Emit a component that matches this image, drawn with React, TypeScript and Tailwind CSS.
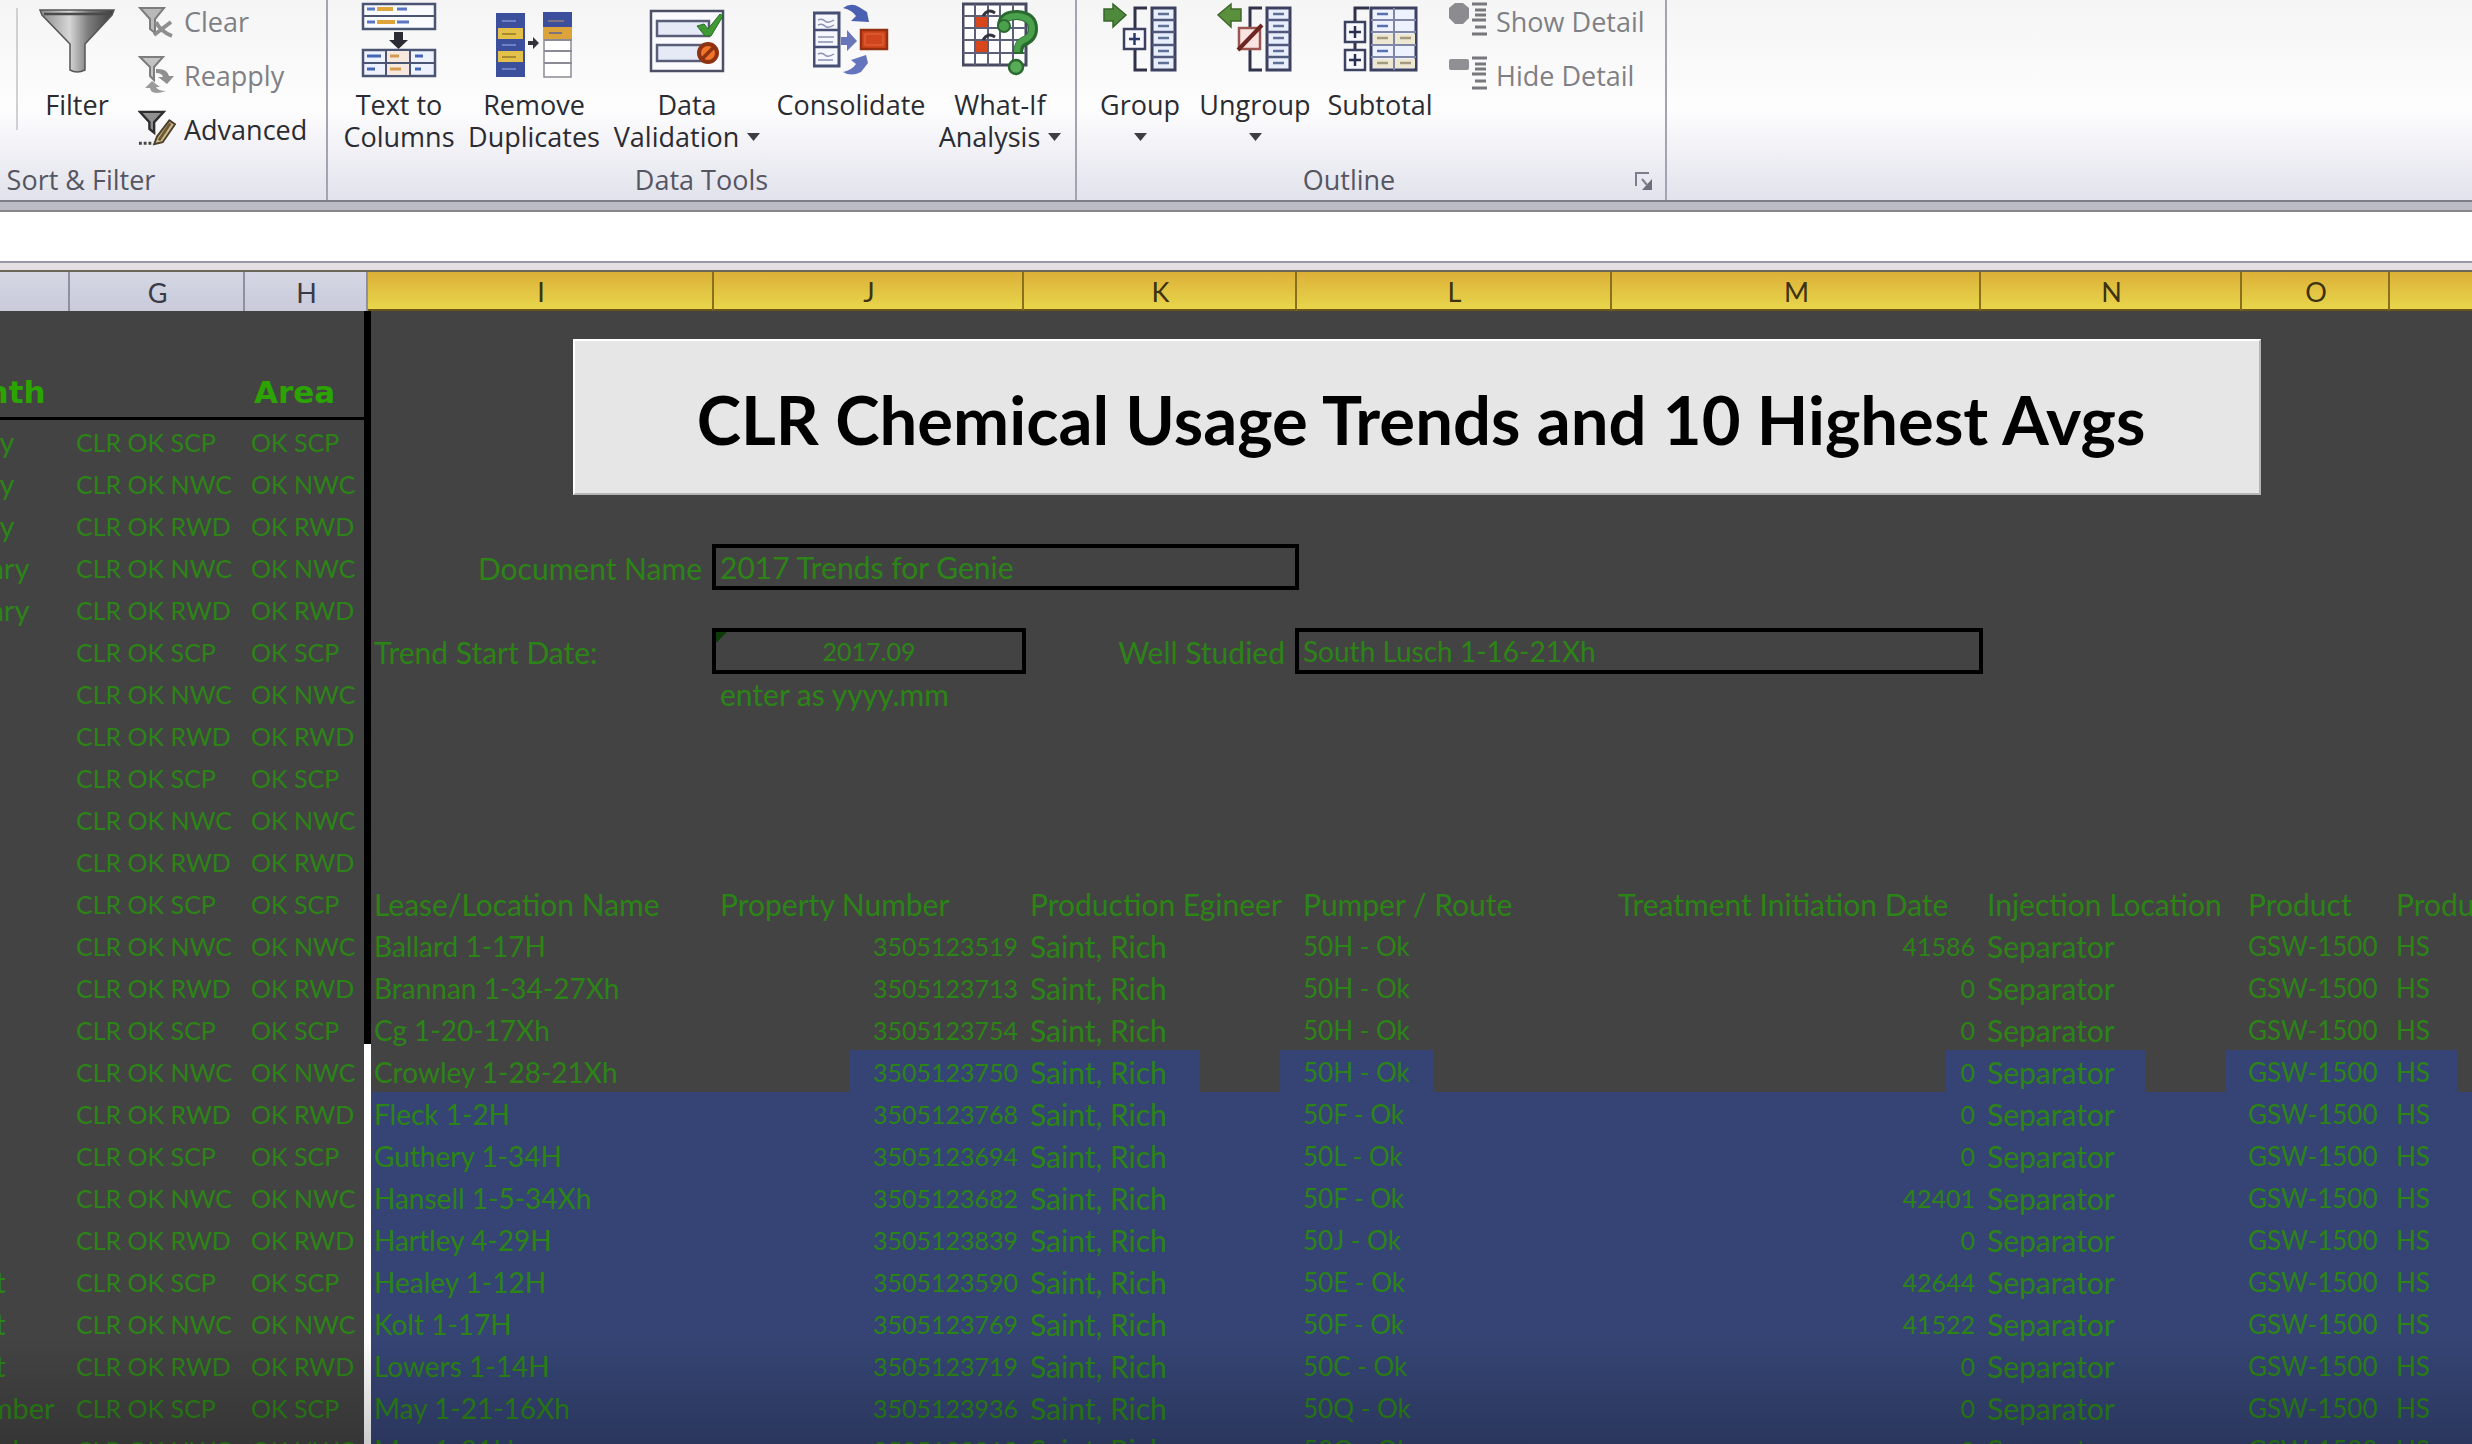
import React from 'react';

/* ---------- Ribbon icons ---------- */

function BigIcon({ children }: { children: React.ReactNode }) {
  return (
    <svg width="76" height="76" viewBox="0 0 76 76" fill="none" className="mb-[11px] block shrink-0" aria-hidden="true">
      {children}
    </svg>
  );
}

function FilterIcon() {
  return (
    <BigIcon>
      <defs>
        <linearGradient id="funnel" x1="0" x2="1" y1="0" y2="0">
          <stop offset="0" stopColor="#8a8a8a" />
          <stop offset="0.4" stopColor="#d6d6d6" />
          <stop offset="0.65" stopColor="#7d7d7d" />
          <stop offset="1" stopColor="#3c3c3c" />
        </linearGradient>
      </defs>
      <path d="M1 8H75L73 13L46 42V68Q38 72 31 68V42L3 13Z" fill="url(#funnel)" stroke="#555" strokeWidth="1.5" />
      <path d="M5 12H71" stroke="#4a4a4a" strokeWidth="2.5" />
    </BigIcon>
  );
}

function TextToColumnsIcon() {
  return (
    <BigIcon>
      <rect x="2" y="2" width="72" height="25" fill="#fafbff" stroke="#4b5573" strokeWidth="2.5" />
      <path d="M2 14H74" stroke="#4b5573" strokeWidth="2" />
      <path d="M6 7H14M36 7H46M6 20H14M36 20H48" stroke="#5b76c4" strokeWidth="3" />
      <path d="M16 7H32M16 20H34" stroke="#e0a53a" strokeWidth="4" />
      <path d="M33 30H42V38H47L37.500 47L28 38H33Z" fill="#2c2c34" />
      <rect x="2" y="48" width="72" height="26" fill="#eef2ff" stroke="#4b5573" strokeWidth="2.5" />
      <rect x="25" y="49" width="23" height="24" fill="#f6e8df" />
      <path d="M2 61H74M25 48V74M49 48V74" stroke="#4b5573" strokeWidth="2" />
      <path d="M6 54H20M6 67H14M54 54H62M54 67H60" stroke="#4464b8" strokeWidth="3" />
      <path d="M29 54H38M29 67H40" stroke="#d49a50" strokeWidth="3" />
    </BigIcon>
  );
}

function RemoveDuplicatesIcon() {
  return (
    <BigIcon>
      <rect x="0" y="11" width="29" height="64" fill="#3c4f9c" />
      <rect x="2" y="26" width="25" height="11" fill="#e3c04a" />
      <rect x="2" y="49" width="25" height="11" fill="#e3c04a" />
      <path d="M6 32H20M6 55H20" stroke="#a98a2c" strokeWidth="2" />
      <path d="M6 19H20M6 43H20M6 67H20" stroke="#6f80c4" strokeWidth="2" />
      <rect x="48" y="11" width="27" height="64" fill="#fff" stroke="#8b8b95" strokeWidth="1.5" />
      <rect x="47" y="10" width="29" height="15" fill="#3c4f9c" />
      <rect x="47" y="25" width="29" height="12" fill="#dba33a" />
      <path d="M48 38H76M48 49H76M48 61H76" stroke="#8b8b95" strokeWidth="2" />
      <path d="M52 19H68M53 31H66" stroke="#7c7280" strokeWidth="2" />
      <path d="M32 39H37V35L43 41L37 47V43H32Z" fill="#33333b" />
    </BigIcon>
  );
}

function DataValidationIcon() {
  return (
    <BigIcon>
      <rect x="2" y="9" width="72" height="60" fill="#fbfbff" stroke="#4d4f66" strokeWidth="2.5" />
      <rect x="8" y="19" width="52" height="15" fill="#e6e9f6" stroke="#5a5d77" strokeWidth="2.500" />
      <rect x="8" y="43" width="52" height="16" fill="#e6e9f6" stroke="#5a5d77" strokeWidth="2.500" />
      <path d="M48 24L55 22L59 27L71 12L74 14L62 34H56Z" fill="#3f9a35" stroke="#2a6d24" strokeWidth="1" />
      <circle cx="59" cy="51" r="9" fill="#f0742a" stroke="#8e3212" strokeWidth="4" />
      <path d="M53 57L65 45" stroke="#8e3212" strokeWidth="3.500" />
    </BigIcon>
  );
}

function ConsolidateIcon() {
  return (
    <BigIcon>
      <rect x="1" y="11" width="25" height="53" fill="#f6f7ff" stroke="#474f74" strokeWidth="3" />
      <path d="M1 28H26M1 45H26" stroke="#474f74" strokeWidth="2.500" />
      <path d="M5 18Q9 16 12 19T21 18M5 23Q9 21 12 24T21 23M5 35H21M5 40H20M5 52Q9 50 12 53T21 52M5 58H20" stroke="#8b92b2" strokeWidth="1.500" />
      <path d="M28 35H34V28L44 39L34 49V43H28Z" fill="#6a76ba" />
      <path d="M30 6Q38 0 46 5L54 10L56 20L38 19L43 14Q39 8 30 6Z" fill="#4a60b0" />
      <path d="M30 70Q38 75 48 70L55 61L53 53L38 58L43 62Q39 68 30 70Z" fill="#6474bd" />
      <rect x="48" y="28" width="26" height="19" fill="#d0451c" stroke="#94300f" strokeWidth="2.500" />
      <path d="M52 32H70V43H52Z" stroke="#e06a3c" strokeWidth="1" />
    </BigIcon>
  );
}

function WhatIfIcon() {
  return (
    <BigIcon>
      <rect x="1" y="2" width="63" height="61" fill="#fff" stroke="#474a60" strokeWidth="3" />
      <rect x="13" y="14" width="13" height="12" fill="#d8471c" />
      <rect x="13" y="38" width="13" height="13" fill="#d8471c" />
      <path d="M13 2V63M26 2V63M38 2V63M51 2V63M1 14H64M1 26H64M1 38H64M1 51H64" stroke="#5c6078" strokeWidth="2" />
      <path d="M21 14Q26 6 33 11M21 38Q26 30 33 35" stroke="#33343f" strokeWidth="3" />
      <path d="M40 24Q40 13 55 13Q71 14 71 27Q71 36 61 40Q56 43 56 52" stroke="#2a6a30" strokeWidth="10" />
      <path d="M41 24Q41 14 55 14Q70 15 70 27Q70 35 60 39Q55 42 55 50" stroke="#4ba04c" strokeWidth="6" />
      <circle cx="42" cy="24" r="6" fill="#4ba04c" stroke="#2a6a30" strokeWidth="2" />
      <circle cx="54" cy="65" r="7" fill="#5aab58" stroke="#2a6a30" strokeWidth="2.500" />
    </BigIcon>
  );
}

function OutlineColumn({ x }: { x: number }) {
  return (
    <g>
      <rect x={x} y="6" width="23" height="62" fill="#e8eefb" stroke="#3c4160" strokeWidth="3" />
      <path d={`M${x} 18H${x + 23}M${x} 30H${x + 23}M${x} 43H${x + 23}M${x} 55H${x + 23}`} stroke="#50587c" strokeWidth="2.500" />
      <path
        d={`M${x + 6} 12H${x + 17}M${x + 6} 24H${x + 17}M${x + 6} 36H${x + 17}M${x + 6} 49H${x + 17}M${x + 6} 61H${x + 17}`}
        stroke="#5f6f96"
        strokeWidth="2.500"
      />
    </g>
  );
}

function GroupIcon() {
  return (
    <BigIcon>
      <OutlineColumn x={50} />
      <path d="M45 6H33V26M33 48V68H45" stroke="#30324a" strokeWidth="3" />
      <path d="M2 7H11V2L24 13L11 25V19H2Z" fill="#4f8a3c" stroke="#39652c" strokeWidth="1.500" />
      <rect x="22" y="27" width="21" height="20" fill="#f7f9ff" stroke="#3c4160" strokeWidth="2.500" />
      <path d="M32.500 31V43M27 37H38" stroke="#2b3a6a" strokeWidth="2.500" />
    </BigIcon>
  );
}

function UngroupIcon() {
  return (
    <BigIcon>
      <OutlineColumn x={50} />
      <path d="M45 6H33V26M33 48V68H45" stroke="#30324a" strokeWidth="3" />
      <path d="M24 7H14V2L1 13L14 25V19H24Z" fill="#5a8f3c" stroke="#3f6a2a" strokeWidth="1.500" />
      <rect x="22" y="26" width="21" height="21" fill="#f9e4e2" stroke="#9c5450" strokeWidth="2.500" />
      <path d="M21 48L45 23" stroke="#6e2622" strokeWidth="4" />
    </BigIcon>
  );
}

function SubtotalIcon() {
  return (
    <BigIcon>
      <path d="M27 6H13V68" stroke="#30324a" strokeWidth="3" />
      <rect x="29" y="6" width="45" height="62" fill="#eef2ff" stroke="#3c4160" strokeWidth="3" />
      <path d="M31 32H73V42H31ZM31 57H73V66H31Z" fill="#eee8d2" />
      <path d="M29 18H74M29 30H74M29 43H74M29 55H74M52 6V68" stroke="#7f86a6" strokeWidth="2" />
      <path d="M35 12H46M35 24H46M35 49H46" stroke="#5872b0" strokeWidth="2.500" />
      <path d="M35 36H46M58 36H69M35 61H46M58 61H69" stroke="#a49a80" strokeWidth="2.500" />
      <rect x="3" y="20" width="20" height="20" fill="#f7f9ff" stroke="#3c4160" strokeWidth="2.500" />
      <rect x="3" y="48" width="20" height="20" fill="#f7f9ff" stroke="#3c4160" strokeWidth="2.500" />
      <path d="M13 24V36M7 30H19M13 52V64M7 58H19" stroke="#2b2f50" strokeWidth="2.500" />
    </BigIcon>
  );
}

function ClearIcon() {
  return (
    <svg width="38" height="38" viewBox="0 0 38 38" fill="none" className="shrink-0" aria-hidden="true">
      <path d="M2 3H26L17 14V28L12 24V14Z" fill="#b9b9b9" stroke="#7d7d7d" strokeWidth="2" />
      <path d="M16 30L33 17M18 17Q22 26 34 31" stroke="#8f8f8f" strokeWidth="4" />
    </svg>
  );
}

function ReapplyIcon() {
  return (
    <svg width="38" height="42" viewBox="0 0 38 42" fill="none" className="shrink-0" aria-hidden="true">
      <path d="M2 3H25L16 13V26L12 22V13Z" fill="#c4c4c4" stroke="#7d7d7d" strokeWidth="2" />
      <path d="M18 15Q29 14 31 22H36L29 30L20 23H25Q24 19 18 19Z" fill="#8f8f8f" />
      <path d="M28 37Q13 42 12 34H7L14 27L22 33H18Q20 37 28 37Z" fill="#9b9b9b" />
    </svg>
  );
}

function AdvancedIcon() {
  return (
    <svg width="38" height="40" viewBox="0 0 40 40" fill="none" className="shrink-0" aria-hidden="true">
      <path d="M2 3H27L17 14V25L12 21V14Z" fill="#8f8f8f" stroke="#2d2d2d" strokeWidth="2.500" />
      <path d="M1 36H4M6 36H9M11 36H14" stroke="#444" strokeWidth="3" />
      <path d="M33 12L39 16L26 35L17 37L20 29Z" fill="#cdb98a" stroke="#4b3f28" strokeWidth="2" />
      <path d="M34 15L22 33" stroke="#6d5a36" strokeWidth="3" />
    </svg>
  );
}

function DetailIcon({ show }: { show: boolean }) {
  return (
    <svg width="40" height="38" viewBox="0 0 40 38" fill="none" className="shrink-0" aria-hidden="true">
      {show ? (
        <path d="M7 3H15L21 8V18L15 24H7L1 18V8Z" fill="#8c8c90" />
      ) : (
        <rect x="1" y="5" width="20" height="11" rx="2" fill="#909094" />
      )}
      <path d="M24 4H39M27 10H38M27 15H38M24 20H38M27 27H38M24 34H39" stroke="#77777c" strokeWidth="3" />
    </svg>
  );
}

/* ---------- Ribbon parts ---------- */

function Arrow() {
  return (
    <svg width="13" height="8" viewBox="0 0 13 8" className="inline-block" aria-hidden="true">
      <path d="M0 0H13L6.500 8Z" fill="#3d3d42" />
    </svg>
  );
}

function BigButton({ width, icon, children }: { width: string; icon: React.ReactNode; children: React.ReactNode }) {
  return (
    <button type="button" className={`flex shrink-0 flex-col items-center pt-[2px] leading-8 whitespace-nowrap text-[#2b2b32] ${width}`}>
      {icon}
      {children}
    </button>
  );
}

function SmallButton({ icon, disabled, children }: { icon: React.ReactNode; disabled?: boolean; children: React.ReactNode }) {
  return (
    <button
      type="button"
      disabled={disabled}
      className="flex h-[54px] items-start gap-2 text-left leading-8 whitespace-nowrap text-[#2b2b32] disabled:text-[#7f7f86]"
    >
      {icon}
      <span className="pt-[6px]">{children}</span>
    </button>
  );
}

function RibbonGroup({ label, width, launcher, children }: { label: string; width: string; launcher?: boolean; children: React.ReactNode }) {
  return (
    <section aria-label={label} className={`relative flex shrink-0 flex-col border-r-2 border-[#a3a3b2] ${width}`}>
      <div className="flex h-[164px]">{children}</div>
      <div className="text-center leading-8 text-[#565663]">{label}</div>
      {launcher && (
        <button type="button" aria-label={`${label} settings`} className="absolute right-3 bottom-[9px]">
          <svg width="18" height="20" viewBox="0 0 18 20" fill="none" aria-hidden="true">
            <path d="M1 15V2H14" stroke="#7d7d8b" strokeWidth="2" />
            <path d="M17 8V19H7Z" fill="#6d6d7b" />
            <path d="M7 8L12 14" stroke="#7d7d8b" strokeWidth="2" />
          </svg>
        </button>
      )}
    </section>
  );
}

function Ribbon() {
  return (
    <header className="flex h-[200px] shrink-0 overflow-hidden bg-linear-to-b from-[#f5f5f5] via-[#fdfdfe] via-55% to-[#e2e2ec] font-['Open_Sans','Noto_Sans',sans-serif] text-[27px] font-medium">
      <RibbonGroup label="Sort & Filter" width="w-[328px] [&>div:last-child]:pr-[164px]">
        <div className="mt-2 ml-4 h-[122px] w-[2px] shrink-0 bg-[#d0d0d4]" />
        <BigButton width="w-[118px]" icon={<FilterIcon />}>
          <span>Filter</span>
        </BigButton>
        <div className="flex flex-col pl-[2px]">
          <SmallButton disabled icon={<span className="pt-[5px]"><ClearIcon /></span>}>Clear</SmallButton>
          <SmallButton disabled icon={<ReapplyIcon />}>Reapply</SmallButton>
          <SmallButton icon={<AdvancedIcon />}>Advanced</SmallButton>
        </div>
      </RibbonGroup>
      <RibbonGroup label="Data Tools" width="w-[749px]">
        <BigButton width="ml-[4px] w-[134px]" icon={<TextToColumnsIcon />}>
          <span>Text to</span>
          <span>Columns</span>
        </BigButton>
        <BigButton width="w-[136px]" icon={<RemoveDuplicatesIcon />}>
          <span>Remove</span>
          <span>Duplicates</span>
        </BigButton>
        <BigButton width="w-[170px]" icon={<DataValidationIcon />}>
          <span>Data</span>
          <span className="flex items-center gap-2">Validation <Arrow /></span>
        </BigButton>
        <BigButton width="w-[158px]" icon={<ConsolidateIcon />}>
          <span>Consolidate</span>
        </BigButton>
        <BigButton width="w-[140px]" icon={<WhatIfIcon />}>
          <span>What-If</span>
          <span className="flex items-center gap-2">Analysis <Arrow /></span>
        </BigButton>
      </RibbonGroup>
      <RibbonGroup label="Outline" width="w-[590px] [&>div:nth-child(2)]:pr-[44px]" launcher>
        <BigButton width="ml-[12px] w-[102px]" icon={<GroupIcon />}>
          <span>Group</span>
          <span className="flex h-8 items-center"><Arrow /></span>
        </BigButton>
        <BigButton width="w-[128px]" icon={<UngroupIcon />}>
          <span>Ungroup</span>
          <span className="flex h-8 items-center"><Arrow /></span>
        </BigButton>
        <BigButton width="w-[122px]" icon={<SubtotalIcon />}>
          <span>Subtotal</span>
        </BigButton>
        <div className="flex flex-col pl-[7px]">
          <SmallButton disabled icon={<DetailIcon show />}>Show Detail</SmallButton>
          <SmallButton disabled icon={<DetailIcon show={false} />}>Hide Detail</SmallButton>
        </div>
      </RibbonGroup>
    </header>
  );
}

/* ---------- Worksheet ---------- */

const months = [
  'January', 'January', 'January', 'February', 'February', 'March', 'March', 'March', 'April', 'April', 'April', 'May', 'May',
  'May', 'June', 'June', 'June', 'July', 'July', 'July', 'August', 'August', 'August', 'September', 'September',
];

const areas = [
  'SCP', 'NWC', 'RWD', 'NWC', 'RWD', 'SCP', 'NWC', 'RWD', 'SCP', 'NWC', 'RWD', 'SCP', 'NWC',
  'RWD', 'SCP', 'NWC', 'RWD', 'SCP', 'NWC', 'RWD', 'SCP', 'NWC', 'RWD', 'SCP', 'NWC',
];

const leases = [
  ['Ballard 1-17H', '3505123519', '50H - Ok', '41586'],
  ['Brannan 1-34-27Xh', '3505123713', '50H - Ok', '0'],
  ['Cg 1-20-17Xh', '3505123754', '50H - Ok', '0'],
  ['Crowley 1-28-21Xh', '3505123750', '50H - Ok', '0'],
  ['Fleck 1-2H', '3505123768', '50F - Ok', '0'],
  ['Guthery 1-34H', '3505123694', '50L - Ok', '0'],
  ['Hansell 1-5-34Xh', '3505123682', '50F - Ok', '42401'],
  ['Hartley 4-29H', '3505123839', '50J - Ok', '0'],
  ['Healey 1-12H', '3505123590', '50E - Ok', '42644'],
  ['Kolt 1-17H', '3505123769', '50F - Ok', '41522'],
  ['Lowers 1-14H', '3505123719', '50C - Ok', '0'],
  ['May 1-21-16Xh', '3505123936', '50Q - Ok', '0'],
  ['May 1-31H', '3505123918', '50Q - Ok', '0'],
];

const headings = [
  'Lease/Location Name', 'Property Number', 'Production Egineer', 'Pumper / Route',
  'Treatment Initiation Date', 'Injection Location', 'Product', 'Product Type',
];

const FIRST_LEASE_ROW = 12;
const SELECTED_FROM = 16;

const selectionEdge = [
  '',
  'bg-[linear-gradient(90deg,transparent_136px,#354474_136px)]',
  'bg-[linear-gradient(90deg,#354474_176px,transparent_176px,transparent_256px,#354474_256px)]',
  'bg-[linear-gradient(90deg,#354474_137px,transparent_137px)]',
  'bg-[linear-gradient(90deg,transparent_334px,#354474_334px)]',
  'bg-[linear-gradient(90deg,#354474_164px,transparent_164px,transparent_245px,#354474_245px)]',
  'bg-[#354474]',
  'bg-[linear-gradient(90deg,#354474_67px,transparent_67px)]',
];

const leaseStyles = [
  'px-[6px] text-[28px]',
  'px-[6px] text-right text-[25px]',
  'px-[6px] text-[30px]',
  'px-[6px] text-[26px]',
  'px-[6px] text-right text-[25px]',
  'px-[6px] text-[30px]',
  'px-[6px] text-[26px]',
  'px-[6px] text-[26px]',
];

const cell = 'h-[42px] overflow-hidden pt-[2px] pb-0 leading-10 whitespace-nowrap';
const caption = `${cell} px-[6px] text-[30px]`;
const box = 'block h-[42px] w-full bg-transparent px-[6px] outline-4 -outline-offset-2 outline-black';

function EntryCells({ row }: { row: number }) {
  if (row === 3) {
    return (
      <>
        <td className={`${cell} pr-3 text-right text-[30px]`}><label htmlFor="doc-name">Document Name</label></td>
        <td colSpan={2} className="p-0 text-[30px]"><input id="doc-name" className={box} defaultValue="2017 Trends for Genie" /></td>
        <td colSpan={5} />
      </>
    );
  }
  if (row === 5) {
    return (
      <>
        <td className={caption}><label htmlFor="start-date">Trend Start Date:</label></td>
        <td className="relative p-0 text-[25px]">
          <input id="start-date" className={`${box} text-center`} defaultValue="2017.09" />
          <span className="absolute top-[2px] left-[2px] border-t-[11px] border-r-[11px] border-t-[#0d3a08] border-r-transparent" />
        </td>
        <td className={`${cell} pr-3 text-right text-[30px]`}><label htmlFor="well">Well Studied</label></td>
        <td colSpan={2} className="p-0 text-[28px]"><input id="well" className={box} defaultValue="South Lusch 1-16-21Xh" /></td>
        <td colSpan={3} />
      </>
    );
  }
  if (row === 6) {
    return (
      <>
        <td />
        <td className={caption}>enter as yyyy.mm</td>
        <td colSpan={6} />
      </>
    );
  }
  return <td colSpan={8} />;
}

function LeaseCells({ row }: { row: number }) {
  const [name, property, route, date] = leases[row - FIRST_LEASE_ROW];
  const values = [name, property, 'Saint, Rich', route, date, 'Separator', 'GSW-1500', 'HS'];
  return (
    <>
      {values.map((value, i) => {
        const fill = row >= SELECTED_FROM ? 'bg-[#354474]' : row === SELECTED_FROM - 1 ? selectionEdge[i] : '';
        return <td key={i} className={`${cell} ${leaseStyles[i]} ${fill}`}>{value}</td>;
      })}
    </>
  );
}

function Worksheet() {
  const letter = 'h-[39px] p-0 pt-[2px] pl-[2px] font-normal leading-[35px]';
  const plain = `${letter} border-r-2 border-[#8f8f9f] bg-linear-to-b from-[#d6d7e4] to-[#c9cada] text-[#3a3a46]`;
  const picked = `${letter} border-[#8a6f1c] border-b-2 border-b-[#6b5618] bg-linear-to-b from-[#dcb038] to-[#e8d64c] text-[#3d3212]`;
  return (
    <main className="relative flex-1 overflow-hidden bg-[#444344] font-['Lato','Open_Sans',sans-serif] text-[27px] text-[#2c8416]">
      <table className="-ml-[84px] w-[calc(100%+84px)] table-fixed border-separate border-spacing-0 text-left">
        <colgroup>
          <col className="w-[154px]" />
          <col className="w-[175px]" />
          <col className="w-[123px]" />
          <col className="w-[346px]" />
          <col className="w-[310px]" />
          <col className="w-[273px]" />
          <col className="w-[315px]" />
          <col className="w-[369px]" />
          <col className="w-[261px]" />
          <col className="w-[148px]" />
          <col />
        </colgroup>
        <thead>
          <tr className="text-center">
            <th scope="col" className={plain} aria-label="F" />
            <th scope="col" className={plain}>G</th>
            <th scope="col" className={plain}>H</th>
            {['I', 'J', 'K', 'L', 'M', 'N', 'O'].map((name) => (
              <th key={name} scope="col" className={`${picked} border-r-2`}>{name}</th>
            ))}
            <th scope="col" className={picked} aria-label="P" />
          </tr>
        </thead>
        <tbody>
          <tr className="font-['DejaVu_Sans',sans-serif] text-[31px] text-[#2ba300]">
            <th scope="col" className="h-[109px] border-b-[3px] border-black p-0 pr-[6px] pb-[5px] text-center align-bottom leading-10">Month</th>
            <td className="border-b-[3px] border-black p-0" />
            <th scope="col" className="border-b-[3px] border-black p-0 pb-[5px] pl-[9px] align-bottom leading-10">Area</th>
            <td colSpan={8} />
          </tr>
          {months.map((month, row) => (
            <tr key={row}>
              <td className={`${cell} px-0 text-[29px]`}>{month}</td>
              <td className={`${cell} px-[6px] text-[25px]`}>CLR OK {areas[row]}</td>
              <td className={`${cell} px-[6px] text-[25px]`}>OK {areas[row]}</td>
              {row >= FIRST_LEASE_ROW ? (
                <LeaseCells row={row} />
              ) : row === FIRST_LEASE_ROW - 1 ? (
                headings.map((text) => (
                  <th key={text} scope="col" className={`${caption} font-normal`}>{text}</th>
                ))
              ) : (
                <EntryCells row={row} />
              )}
            </tr>
          ))}
        </tbody>
      </table>

      <div className="absolute top-[39px] bottom-0 left-[364px] flex w-[7px] flex-col">
        <div className="h-[733px] bg-black" />
        <div className="flex-1 bg-white" />
      </div>

      <button
        type="button"
        className="absolute top-[67px] right-[211px] left-[573px] h-[156px] border-2 border-t-white border-r-[#b5b3b3] border-b-[#b5b3b3] border-l-white bg-[#e7e6e6] pt-1 pl-2 text-[67px] font-bold whitespace-nowrap text-black"
      >
        CLR Chemical Usage Trends and 10 Highest Avgs
      </button>

      <div className="pointer-events-none absolute inset-x-0 bottom-0 h-[110px] bg-linear-to-b from-transparent to-black/20" />
    </main>
  );
}

export default function App() {
  return (
    <div className="flex h-screen flex-col overflow-hidden bg-[#444344]">
      <Ribbon />
      <div className="h-3 shrink-0 border-y-2 border-t-[#7d7d88] border-b-[#868688] bg-[#bcbcc4]" />
      <input aria-label="Formula bar" className="block h-[49px] w-full shrink-0 bg-white px-4 text-2xl outline-none" />
      <div className="h-[11px] shrink-0 border-t-2 border-b-2 border-t-[#9a97a6] border-b-[#6b6658] bg-[#e4dfe3]" />
      <Worksheet />
    </div>
  );
}
